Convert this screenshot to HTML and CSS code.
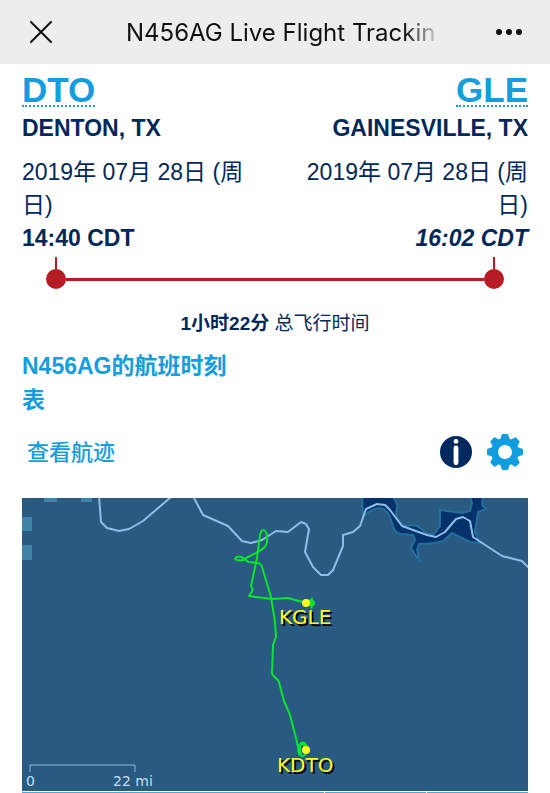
FILE: index.html
```
<!DOCTYPE html>
<html lang="zh-CN">
<head>
    <meta charset="UTF-8">
    <meta name="viewport" content="width=device-width, initial-scale=1.0">
    <title>N456AG Live Flight Tracking</title>
    <link rel="stylesheet" href="styles.css">
</head>
<body>
    <header class="topbar">
        <button type="button" class="icon-button" aria-label="关闭">
            <svg width="22" height="22" viewBox="0 0 22 22"><path d="M1 1L21 21M21 1L1 21" fill="none" stroke="#111" stroke-width="2" stroke-linecap="round"/></svg>
        </button>
        <h1 class="topbar-title">N456AG Live Flight Trackin</h1>
        <button type="button" class="icon-button" aria-label="更多">
            <svg width="28" height="8" viewBox="0 0 28 8" fill="#111"><circle cx="4" cy="4" r="3"/><circle cx="14" cy="4" r="3"/><circle cx="24" cy="4" r="3"/></svg>
        </button>
    </header>

    <main class="flight">
        <section class="route">
            <div class="airport">
                <a href="#dto" class="airport-code">DTO</a>
                <strong class="airport-city">DENTON, TX</strong>
                <span class="airport-date">2019年 07月 28日 (周日)</span>
                <strong class="airport-time">14:40 CDT</strong>
            </div>
            <div class="airport airport-arrival">
                <a href="#gle" class="airport-code">GLE</a>
                <strong class="airport-city">GAINESVILLE, TX</strong>
                <span class="airport-date">2019年 07月 28日 (周日)</span>
                <strong class="airport-time"><em>16:02 CDT</em></strong>
            </div>
        </section>

        <div class="progress">
            <span class="progress-stop"></span>
            <span class="progress-line"></span>
            <span class="progress-stop"></span>
        </div>
        <p class="duration"><strong>1小时22分</strong> 总飞行时间</p>

        <a href="#schedule" class="schedule-link">N456AG的航班时刻表</a>

        <div class="map-tools">
            <a href="#tracklog" class="track-link">查看航迹</a>
            <button type="button" class="icon-button" aria-label="信息">
                <svg width="32" height="32" viewBox="0 0 32 32"><circle cx="16" cy="16" r="16" fill="#022a5e"/><circle cx="16" cy="5.4" r="2.4" fill="#fff"/><rect x="13.6" y="9.6" width="4.8" height="19.4" rx="2.2" fill="#fff"/></svg>
            </button>
            <button type="button" class="icon-button" aria-label="设置">
                <svg width="36" height="36" viewBox="-18 -18 36 36" fill="#0f9de0">
                    <defs><path id="tooth" d="M-6.5 -11C-4.5 -13 -4 -14 -3.6 -16.6Q-3.3 -18 -2 -18H2Q3.3 -18 3.6 -16.6C4 -14 4.5 -13 6.5 -11Z"/></defs>
                    <path fill-rule="evenodd" d="M0 -13.4A13.4 13.4 0 1 1 0 13.4A13.4 13.4 0 1 1 0 -13.4ZM0 -7A7 7 0 1 0 0 7A7 7 0 1 0 0 -7Z"/>
                    <use href="#tooth"/>
                    <use href="#tooth" transform="rotate(45)"/>
                    <use href="#tooth" transform="rotate(90)"/>
                    <use href="#tooth" transform="rotate(135)"/>
                    <use href="#tooth" transform="rotate(180)"/>
                    <use href="#tooth" transform="rotate(225)"/>
                    <use href="#tooth" transform="rotate(270)"/>
                    <use href="#tooth" transform="rotate(315)"/>
                </svg>
            </button>
        </div>

        <svg class="map" viewBox="0 0 506 293" role="img" aria-label="KDTO - KGLE">
            <rect width="506" height="293" fill="#295a81"/>
            <path class="map-tile" d="M22 0H35V4H22ZM59 0H70V4H59ZM0 19H10V33H0ZM0 47H10V62H0Z"/>
            <!-- lake -->
            <path class="map-lake" d="M340 -2H370Q376 5 375 9L374 16Q376 24 383 28Q393 26 398 30L406 36H412L418 28V12L440 15L448 13L450 5L448 -2H461L460 7L464 11L456 14L453 34L458 45L448 44L430 35L421 43Q412 46 397 46L395 52L398 64L389 50L393 42L391 37L378 36Q372 34 371 28L368 19Q365 11 357 10Q348 11 341 19Z"/>
            <!-- rivers -->
            <g class="map-river">
                <path d="M77 -2L79 24L85 30L97 33L107 31L121 23L149 -1"/>
                <path d="M171 -2L181 17L206 28L220 43L229 45L240 42L254 33L266 34L279 24L284 26L287 31L283 54L291 69L299 77L306 77L311 72L321 48V37L331 34L338 28L344 11L355 6L363 7L368 12L380 28L405 37L414 39L423 34L434 21L441 19L448 23L451 39L480 58L500 63L507 70"/>
            </g>
            <!-- flown track -->
            <path class="map-track" d="M284 252C286 246 281 242 278 246C275 251 276 257 280 258C285 259 285 249 282 247C276 244 274 252 279 257C276 253 276 249 275 244L268 217L262 203L257 184C255 179 251 180 250 175L251 147L254 139L253 124L249 99L240 69Q239 65 235 65L227 64C223 63 225 61 219 59C214 58 211 61 215 62C219 63 223 62 226 59L236 54C242 50 246 48 245 40C245 30 239 30 238 37L235 60L229 88Q232 92 229 95L227 98L250 101L266 100L284 105"/>
            <path d="M276 247L279 248L280 257L276 254Z" fill="#0be52c"/>
            <path d="M286 102L289 101L290 98L291 102L293 104V107L291 108L290 112L288 108L286 107Z" fill="#0be52c"/>
            <circle cx="284" cy="105" r="4" fill="#ffff1e"/>
            <circle cx="284" cy="252" r="4" fill="#ffff1e"/>
            <text class="map-airport" x="257" y="126">KGLE</text>
            <text class="map-airport" x="255" y="274">KDTO</text>
            <!-- scale -->
            <path d="M8 274V267H113V274" fill="none" stroke="#8fb8d8"/>
            <text class="map-scale" x="4" y="288">0</text>
            <text class="map-scale" x="91" y="288">22 mi</text>
        </svg>

        <div class="table-edge"><span></span><span></span><span></span></div>
    </main>
</body>
</html>
```
FILE: styles.css
```
:root {
    --navy: #022859;
    --blue: #159ddd;
    --red: #b71c25;
}

* { box-sizing: border-box; }

body {
    margin: 0;
    background: #fff;
    color: var(--navy);
    font-family: "Liberation Sans", "Noto Sans CJK SC", sans-serif;
    font-size: 23px;
    line-height: 33px;
}

a { color: var(--blue); text-decoration: none; }

.icon-button {
    display: flex;
    padding: 0;
    border: none;
    background: none;
    cursor: pointer;
}

/* top bar */
.topbar {
    display: flex;
    align-items: center;
    height: 64px;
    padding: 0 27px 0 30px;
    background: #ededee;
}
.topbar-title {
    margin: 0 auto 0 74px;
    color: #111;
    font-family: Inter, sans-serif;
    font-size: 24px;
    font-weight: 400;
    white-space: nowrap;
    -webkit-mask-image: linear-gradient(to right, #000 90%, rgba(0, 0, 0, 0.2));
    mask-image: linear-gradient(to right, #000 90%, rgba(0, 0, 0, 0.2));
}

.flight { padding: 8px 22px 0; }

/* departure / arrival */
.route { display: flex; justify-content: space-between; }
.airport {
    display: flex;
    flex-direction: column;
    align-items: flex-start;
    width: 46%;
}
.airport-arrival { align-items: flex-end; text-align: right; }
.airport-code {
    padding-top: 3px;
    border-bottom: 2px dotted var(--blue);
    font-size: 35px;
    font-weight: 700;
    line-height: 30px;
}
.airport-city { margin: 5px 0 11px; white-space: nowrap; }

/* progress bar */
.progress {
    display: flex;
    align-items: center;
    margin: 14px 24px 0;
}
.progress-stop {
    position: relative;
    width: 20px;
    height: 20px;
    border-radius: 50%;
    background: var(--red);
}
.progress-stop::before {
    content: "";
    position: absolute;
    bottom: 100%;
    left: 9px;
    width: 2px;
    height: 12px;
    background: var(--red);
}
.progress-line { flex: 1; height: 3px; background: var(--red); }

.duration {
    margin: 18px 0 9px;
    font-size: 19px;
    text-align: center;
}

.schedule-link {
    display: block;
    width: 44%;
    font-weight: 700;
    line-height: 34px;
}

/* map header */
.map-tools {
    display: flex;
    align-items: center;
    gap: 15px;
    padding: 17px 5px 28px;
}
.track-link { flex: 1; font-size: 22px; font-weight: 500; }

/* map */
.map { display: block; width: 100%; }
.map-tile { fill: #4184a9; }
.map-lake { fill: #05326b; stroke: #246e9c; stroke-width: 2; }
.map-river { fill: none; stroke: #8fbfe8; stroke-width: 2; stroke-linejoin: round; }
.map-track { fill: none; stroke: #0be52c; stroke-width: 2; stroke-linejoin: round; }
.map-airport {
    fill: #ffff1e;
    font-family: "DejaVu Sans", sans-serif;
    font-size: 20px;
    text-shadow: 2px 2px 0 #000;
}
.map-scale {
    fill: #c5dff2;
    font-family: "DejaVu Sans", sans-serif;
    font-size: 14px;
}

.table-edge {
    display: grid;
    grid-template-columns: 3fr 1fr 1fr;
    gap: 1px;
    padding-top: 1px;
}
.table-edge span { height: 1px; background: #4aa9c9; }
```
